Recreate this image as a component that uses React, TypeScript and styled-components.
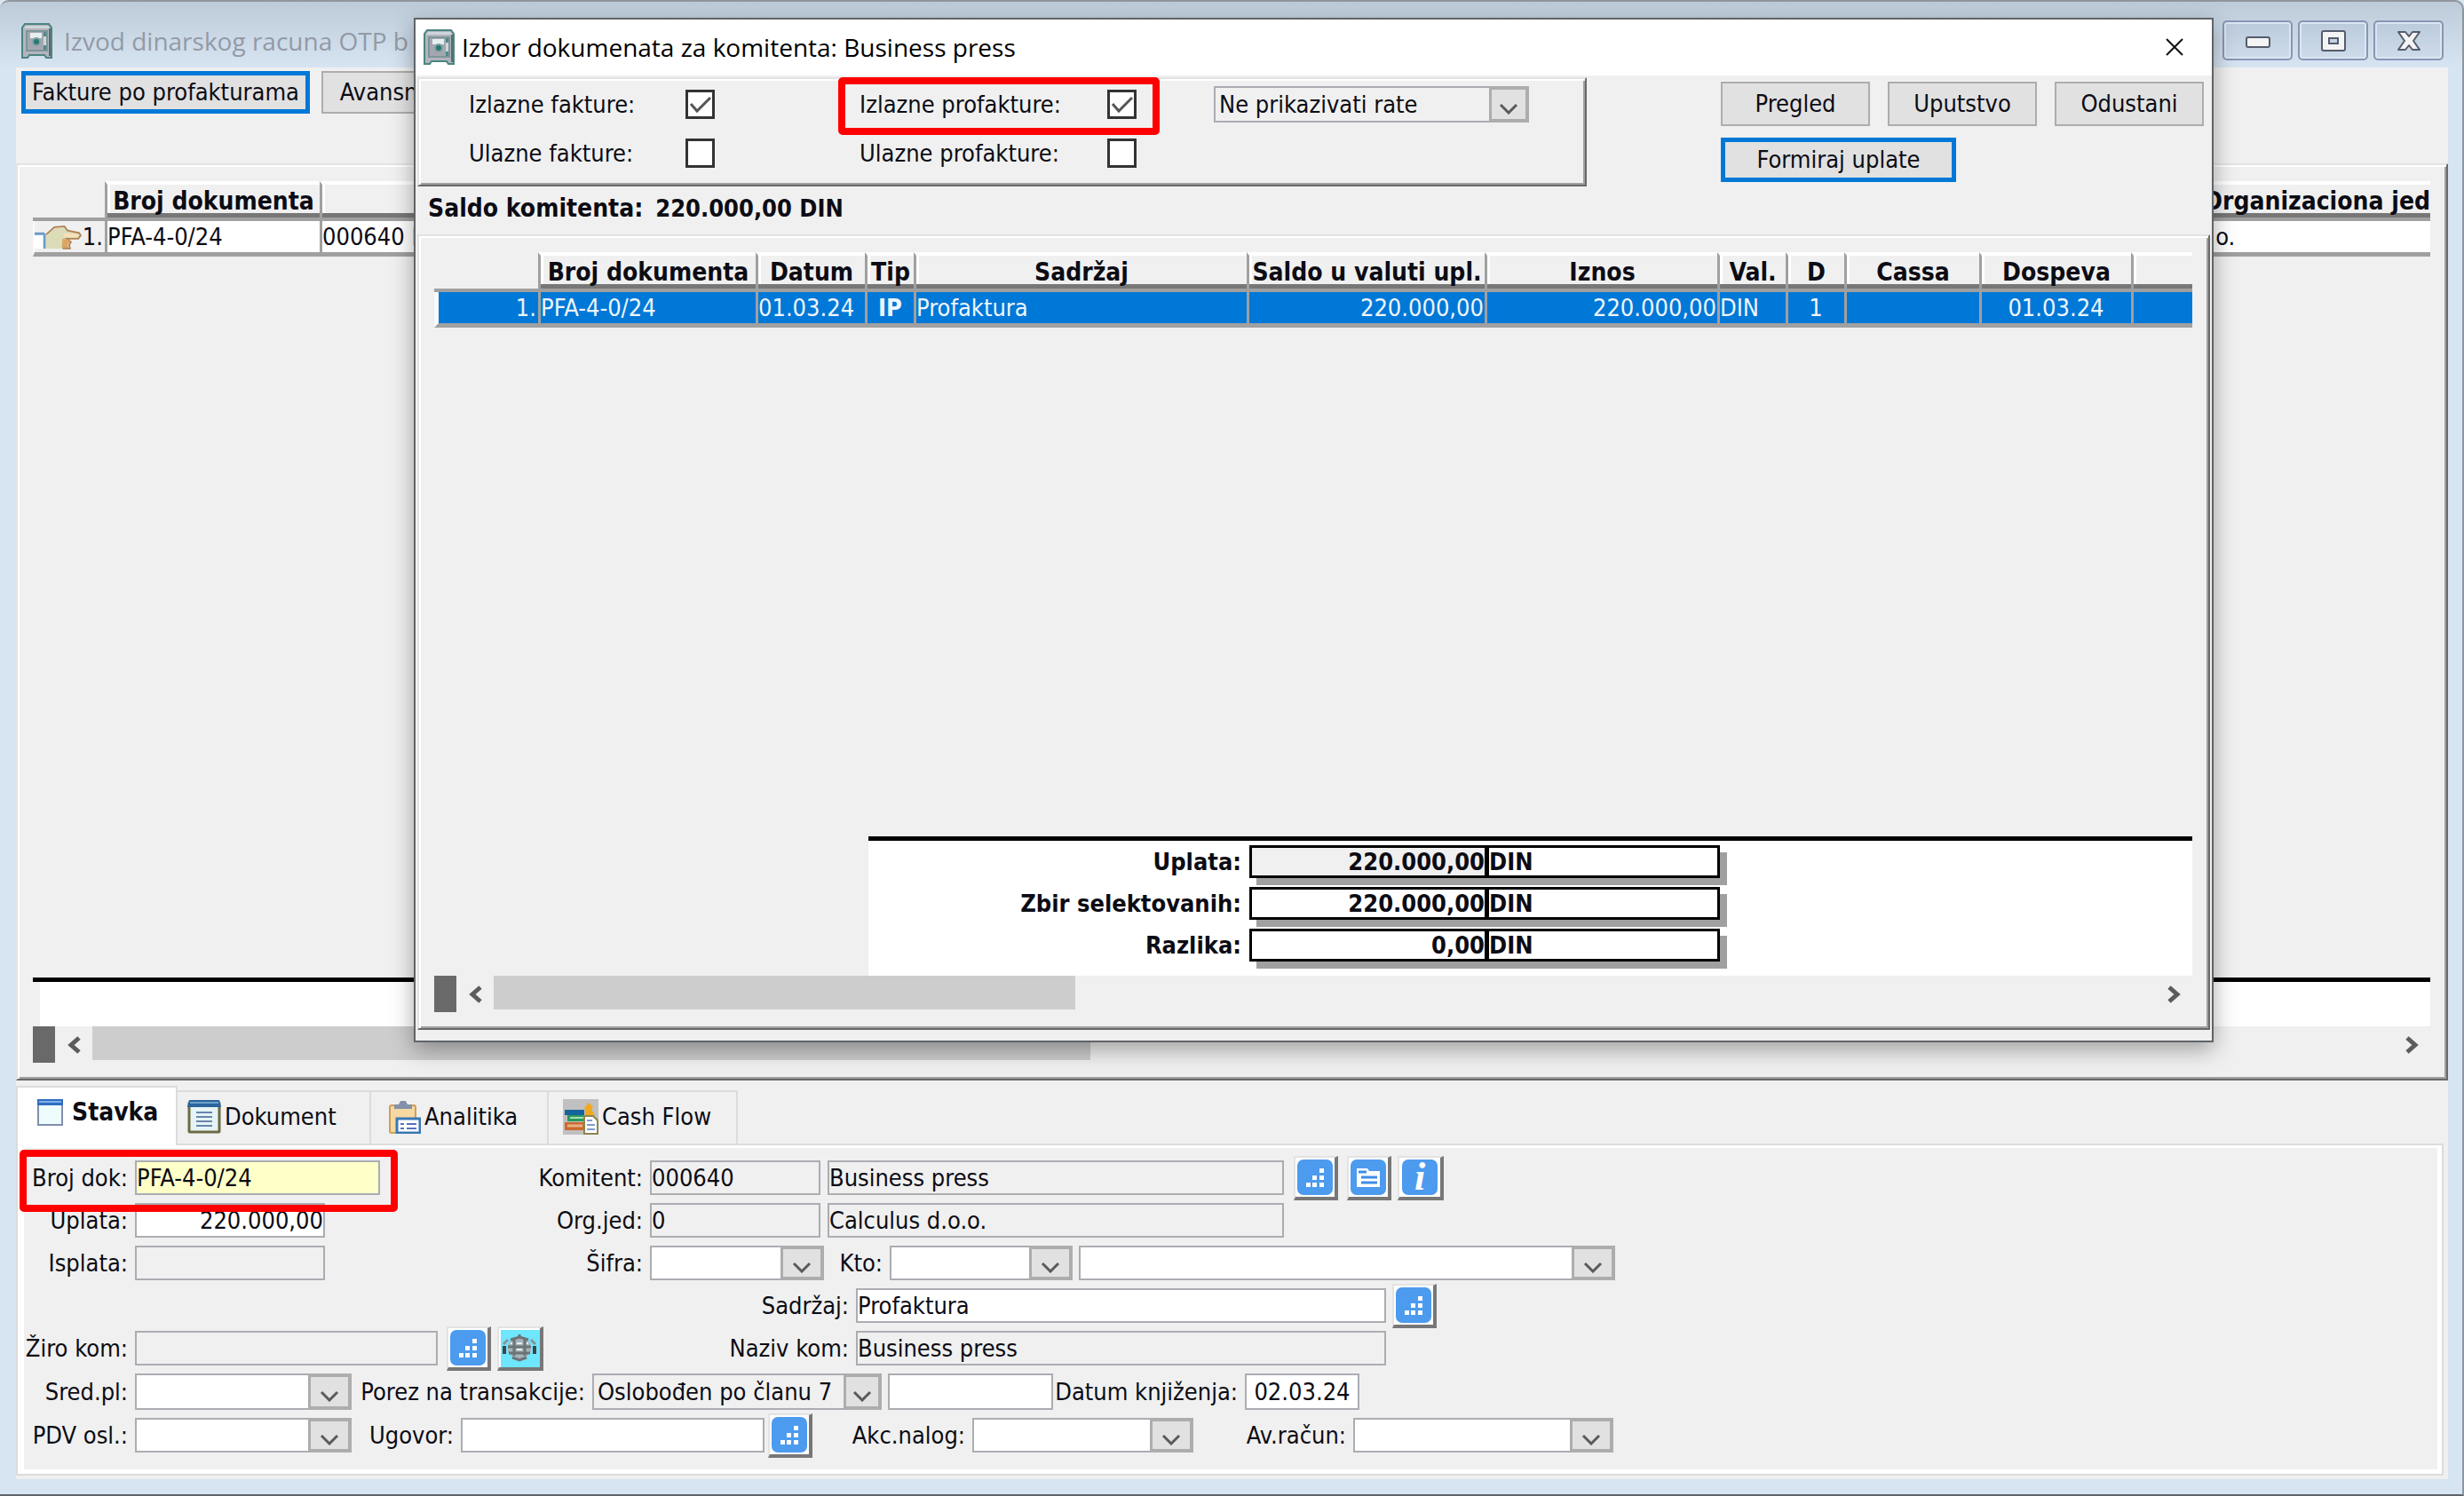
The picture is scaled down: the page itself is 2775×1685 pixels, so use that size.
import React from "react";
import styled, { createGlobalStyle, css } from "styled-components";

const UI = '"DejaVu Sans Condensed", "DejaVu Sans", "Noto Sans", sans-serif';
const TITLE = '"Open Sans", "Noto Sans", sans-serif';

const Global = createGlobalStyle`
  *, *::before, *::after { box-sizing: border-box; }
  body { margin: 0; background: #d7e4f2; }
  button, input, select { font: inherit; color: inherit; margin: 0; }
`;

/* Raised 3D edge used by panels */
const raised = css`
  border: 2px solid;
  border-color: #e3e3e3 #696969 #696969 #e3e3e3;
  box-shadow: inset 2px 2px #fff, inset -2px -2px #a0a0a0;
`;

const Desktop = styled.div`
  position: relative;
  min-height: 100vh;
  display: flex;
  flex-direction: column;
  padding: 0 16px 17px 18px;
  border-top: 2px solid #8f959c;
  border-right: 2px solid #8f959c;
  border-bottom: 2px solid #5f646b;
  border-radius: 10px 10px 0 0;
  background: linear-gradient(#bdcbd9, #d7e4f2 74px);
  font: 27px/32px ${UI};
  color: #0c0c14;
`;

const TitleBar = styled.header`
  display: flex;
  align-items: center;
  height: 74px;
  padding: 13px 5px 0 6px;
  gap: 13px;
  font: 28px/36px ${TITLE};
  color: #929aa6;
`;

const TitleText = styled.h1`
  flex: 1;
  min-width: 0;
  margin: 0;
  font: inherit;
  white-space: nowrap;
`;

const WindowButtons = styled.div`
  display: flex;
  gap: 6px;
`;

const WindowButton = styled.button`
  width: 79px;
  height: 45px;
  padding: 0;
  display: grid;
  place-items: center;
  border: 2px solid #8796b4;
  border-radius: 5px;
  box-shadow: inset 0 0 0 2px #dbe6f2;
  background: linear-gradient(#bccbdc, #cddbea);
`;

const Client = styled.main`
  flex: 1;
  display: flex;
  flex-direction: column;
  background: #f0f0f0;
  padding-bottom: 4px;
`;

const Toolbar = styled.div`
  display: flex;
  gap: 13px;
  height: 108px;
  padding: 4px 6px;
`;

const PushButton = styled.button<{ $w: number; $primary?: boolean; $h?: number }>`
  width: ${(p) => p.$w}px;
  height: ${(p) => p.$h ?? 50}px;
  padding: 0;
  border: ${(p) => (p.$primary ? "5px solid #0078d7" : "2px solid #adadad")};
  background: #e1e1e1;
  text-align: center;
  white-space: nowrap;
`;

const ListPanel = styled.section<{ $inDialog?: boolean }>`
  ${raised}
  flex: 1;
  display: flex;
  flex-direction: column;
  padding: 18px 18px 18px 17px;
  margin: ${(p) => (p.$inDialog ? "0 2px 12px" : "0")};
`;

const Spacer = styled.div`
  flex: 1;
`;

const Grid = styled.table`
  width: 100%;
  table-layout: fixed;
  border-collapse: separate;
  border-spacing: 0;
`;

const Head = styled.th<{ $end?: boolean }>`
  height: 45px;
  padding: 0;
  border-top: 4px solid #fff;
  border-bottom: 4px solid #a0a0a0;
  border-left: 3px solid #a0a0a0;
  box-shadow: inset 0 -5px #777, inset 3px 0 #fff;
  font-size: 28px;
  line-height: 32px;
  text-align: ${(p) => (p.$end ? "right" : "center")};
  white-space: nowrap;
`;

const Corner = styled.td`
  padding: 0;
  border-bottom: 4px solid #a0a0a0;
`;

const Cell = styled.td<{ $sel?: boolean; $align?: string; $bold?: boolean }>`
  height: 40px;
  padding: 0 1px 0 0;
  border-left: 3px solid #a0a0a0;
  border-bottom: 5px solid #a0a0a0;
  background: ${(p) => (p.$sel ? "#0078d7" : "#fff")};
  color: ${(p) => (p.$sel ? "#eef5fc" : "inherit")};
  text-align: ${(p) => p.$align ?? "left"};
  font-weight: ${(p) => (p.$bold ? 700 : 400)};
  line-height: 32px;
  white-space: nowrap;
`;

const RowHead = styled.th<{ $sel?: boolean }>`
  height: 40px;
  padding: 0;
  border-bottom: 5px solid #a0a0a0;
  border-left: ${(p) => (p.$sel ? 5 : 2)}px solid #fbfbfb;
  background: ${(p) => (p.$sel ? "#0078d7" : "#f0f0f0")};
  color: ${(p) => (p.$sel ? "#eef5fc" : "inherit")};
  font-weight: 400;
`;

const RowHeadInner = styled.div`
  display: flex;
  align-items: center;
  justify-content: flex-end;
  gap: 1px;
  padding-right: 2px;
  line-height: 32px;
`;

const Footer = styled.div<{ $indent: number; $h: number }>`
  margin-left: ${(p) => p.$indent}px;
  height: ${(p) => p.$h}px;
  padding-top: 5px;
  border-top: 5px solid #000;
  background: #fff;
  display: flex;
  flex-direction: column;
  gap: 10px;
`;

const SummaryStrip = styled.div`
  height: 55px;
  padding-left: 8px;
  border-top: 5px solid #000;
  background: #fff content-box;
`;

const Total = styled.div`
  display: flex;
  align-items: center;
  height: 37px;
  font-weight: 700;
`;

const TotalLabel = styled.label`
  width: 429px;
  padding-right: 9px;
  text-align: right;
  white-space: nowrap;
`;

const TotalBox = styled.div`
  display: flex;
  width: 530px;
  height: 37px;
  border: 3px solid #000;
  box-shadow: 8px 8px #a0a0a0;
`;

const TotalValue = styled.input<{ $gray?: boolean }>`
  width: 267px;
  padding: 0;
  border: 0;
  border-right: 5px solid #000;
  background: ${(p) => (p.$gray ? "#f0f0f0" : "#fff")};
  font-weight: 700;
  text-align: right;
`;

const TotalUnit = styled.span`
  flex: 1;
  line-height: 32px;
  background: #fff;
`;

const ScrollRow = styled.div`
  display: flex;
  height: 41px;
`;

const ScrollGrip = styled.div`
  width: 25px;
  background: #696969;
`;

const ScrollArrow = styled.button`
  width: 42px;
  padding: 0;
  border: 0;
  background: none;
  display: grid;
  place-items: center;
`;

const ScrollTrack = styled.div`
  flex: 1;
`;

const ScrollThumb = styled.div<{ $pct: number }>`
  width: ${(p) => p.$pct}%;
  height: 38px;
  background: #cdcdcd;
`;

const Tabs = styled.div`
  display: flex;
  align-items: flex-end;
  margin-top: 6px;
`;

const Tab = styled.button<{ $w: number; $pad: number; $on?: boolean }>`
  width: ${(p) => p.$w}px;
  height: ${(p) => (p.$on ? 67 : 60)}px;
  display: flex;
  align-items: center;
  gap: ${(p) => (p.$on ? 10 : 4)}px;
  padding: 0 0 ${(p) => (p.$on ? 10 : 3)}px ${(p) => p.$pad}px;
  border: 2px solid #dcdcdc;
  border-left-width: ${(p) => (p.$on ? 2 : 0)}px;
  border-bottom: 0;
  background: ${(p) => (p.$on ? "#fff" : "#f0f0f0")};
  margin-bottom: ${(p) => (p.$on ? -2 : 0)}px;
  position: relative;
  font-weight: ${(p) => (p.$on ? 700 : 400)};
  font-size: ${(p) => (p.$on ? 28 : 27)}px;
  white-space: nowrap;
`;

const Page = styled.section`
  margin-right: 5px;
  border: 2px solid #dcdcdc;
`;

const Form = styled.form`
  display: flex;
  flex-direction: column;
  gap: 9px;
  padding: 14px 0 19px;
  border: solid #fff;
  border-width: 3px 5px 5px 7px;
`;

const Row = styled.div<{ $h?: number }>`
  display: flex;
  align-items: center;
  height: ${(p) => p.$h ?? 39}px;
`;

const Marked = styled.div`
  position: relative;
  display: flex;
  align-items: center;
  height: 100%;
`;

const RedFrame = styled.span<{ $inset: string }>`
  position: absolute;
  inset: ${(p) => p.$inset};
  border: 8px solid #fe0000;
  border-radius: 5px;
  pointer-events: none;
  z-index: 2;
`;

const Label = styled.label<{ $w: number }>`
  width: ${(p) => p.$w}px;
  padding-right: 8px;
  text-align: right;
  white-space: nowrap;
`;

const Field = styled.input<{ $w: number; $tone?: "gray" | "yellow"; $right?: boolean; $mid?: boolean; $gap?: number }>`
  width: ${(p) => p.$w}px;
  height: 100%;
  margin-left: ${(p) => p.$gap ?? 0}px;
  padding: 0;
  border: 2px solid #abadb3;
  border-radius: 0;
  outline: 0;
  background: ${(p) => (p.$tone === "gray" ? "#f0f0f0" : p.$tone === "yellow" ? "#ffffc8" : "#fff")};
  text-align: ${(p) => (p.$right ? "right" : p.$mid ? "center" : "left")};
`;

const SelectBox = styled.div<{ $w: number; $gap?: number }>`
  display: grid;
  width: ${(p) => p.$w}px;
  height: 100%;
  margin-left: ${(p) => p.$gap ?? 0}px;
  > * { grid-area: 1 / 1; }
`;

const Select = styled.select<{ $gray?: boolean }>`
  appearance: none;
  width: 100%;
  height: 100%;
  padding: 0 50px 0 4px;
  border: 2px solid #abadb3;
  border-radius: 0;
  background: ${(p) => (p.$gray ? "#f0f0f0" : "#fff")};
`;

const Arrow = styled.span<{ $w: number }>`
  justify-self: end;
  width: ${(p) => p.$w}px;
  display: grid;
  place-items: center;
  padding-top: 9px;
  border: 4px solid #adadad;
  border-left-width: 3px;
  background: #e1e1e1;
  pointer-events: none;
`;

const IconButton = styled.button<{ $gap: number; $w?: number; $cyan?: boolean }>`
  flex: none;
  width: ${(p) => p.$w ?? 50}px;
  height: 50px;
  margin-left: ${(p) => p.$gap}px;
  padding: 0;
  display: grid;
  place-items: center;
  border: solid;
  border-width: 2px 4px 4px 2px;
  border-color: #e3e3e3 #777 #777 #e3e3e3;
  background: ${(p) => (p.$cyan ? "#6ee6fd" : "#fff")};
  box-shadow: inset 2px 2px #fff;
`;

const Tile = styled.span`
  width: 40px;
  height: 40px;
  display: grid;
  place-items: center;
  border-radius: 7px;
  background: #4c9bee;
  color: #fff;
  font: italic bold 44px/38px "Liberation Serif", serif;
`;

const Dialog = styled.section`
  position: absolute;
  top: 18px;
  left: 466px;
  right: 280px;
  bottom: 509px;
  display: flex;
  flex-direction: column;
  border: 2px solid #606468;
  background: #f0f0f0;
  box-shadow: 0 8px 24px rgba(0, 0, 0, 0.34);
  z-index: 5;
`;

const DialogTitle = styled.header`
  display: flex;
  align-items: center;
  gap: 8px;
  height: 63px;
  padding: 0 22px 1px 9px;
  background: #fff;
  color: #000;
  font: 28px/36px ${TITLE};
`;

const CloseButton = styled.button`
  width: 40px;
  height: 40px;
  padding: 0;
  border: 0;
  background: none;
  display: grid;
  place-items: center;
`;

const DialogTop = styled.div`
  display: flex;
  justify-content: space-between;
  padding: 2px 9px 0 2px;
`;

const Filters = styled.fieldset`
  ${raised}
  width: 1317px;
  height: 123px;
  margin: 0;
  padding: 8px 0 0 56px;
  display: grid;
  grid-template-columns: 440px 399px 355px;
  grid-auto-rows: 41px;
  row-gap: 14px;
`;

const Check = styled.div`
  position: relative;
  justify-self: start;
  display: flex;
  align-items: center;
`;

const CheckLabel = styled.label<{ $w: number }>`
  width: ${(p) => p.$w}px;
  white-space: nowrap;
`;

const CheckMark = styled.span`
  display: grid;
  width: 33px;
  height: 33px;
  > * { grid-area: 1 / 1; }
  svg { pointer-events: none; }
`;

const CheckInput = styled.input`
  appearance: none;
  width: 33px;
  height: 33px;
  border: 3px solid #333;
  background: #fff;
  & + svg { visibility: hidden; }
  &:checked + svg { visibility: visible; }
`;

const Actions = styled.div`
  display: grid;
  grid-template-columns: repeat(3, 168px);
  gap: 13px 20px;
  align-content: start;
  padding-top: 5px;
`;

const Saldo = styled.p`
  margin: 0;
  height: 54px;
  padding-left: 14px;
  display: flex;
  gap: 14px;
  font-weight: 700;
  line-height: 50px;
`;

const Caption = styled.span`
  font-size: 28px;
`;

const SafeIcon = () => (
  <svg width="35" height="40" viewBox="0 0 35 40" aria-hidden="true">
    <path d="M4 1h27l3 4v34h-6l-2-3H9l-2 3H1V5z" fill="#b4b4be" stroke="#4a8580" strokeWidth="2" />
    <path d="M5 3h25l2 3H3z" fill="#cfd6da" />
    <path d="M31 6h2v31h-2z" fill="#4f6f74" />
    <rect x="6" y="9" width="23" height="22" fill="#a4a6b0" stroke="#7d9698" strokeWidth="2" />
    <rect x="10" y="11" width="13" height="6" fill="#e6efef" />
    <rect x="25" y="10" width="3" height="20" fill="#4b8c84" />
    <rect x="25" y="15" width="3" height="10" fill="#cfd6da" />
    <circle cx="17" cy="21" r="5" fill="#7fa3a4" />
    <circle cx="17" cy="21" r="3" fill="#2a7771" />
  </svg>
);

const HandIcon = () => (
  <svg width="57" height="29" viewBox="0 0 57 29" aria-hidden="true">
    <rect x="0" y="10" width="11" height="19" fill="#fff" />
    <path d="M0 11h12M12 11v18" fill="none" stroke="#6b9bc9" strokeWidth="3" />
    <path d="M14 29V13L24 3l12-1 4 4 14 3 2 4-3 4H41l3 4-3 3v5z" fill="#dcdcb8" />
    <path d="M14 12L24 3l12-1 4 5 14 3 2 3-3 4H39l5 4-2 4 1 4h-9" fill="none" stroke="#b08257" strokeWidth="2" />
    <path d="M34 11h18l2 2-2 2H36z" fill="#f6e0b8" />
    <path d="M34 17l7 1 2 3-3 3 1 4h-8z" fill="#dca560" />
  </svg>
);

const MinIcon = () => (
  <svg width="28" height="16" viewBox="0 0 28 16" aria-hidden="true">
    <rect x="1" y="4" width="26" height="11" rx="2" fill="#f4f4f4" stroke="#555c6c" strokeWidth="2" />
  </svg>
);
const MaxIcon = () => (
  <svg width="28" height="24" viewBox="0 0 28 24" aria-hidden="true">
    <rect x="1" y="1" width="26" height="22" rx="2" fill="#f4f4f4" stroke="#555c6c" strokeWidth="2" />
    <rect x="9" y="9" width="10" height="6" fill="#c4d2e2" stroke="#555c6c" strokeWidth="2" />
  </svg>
);
const XIcon = () => (
  <svg width="28" height="24" viewBox="0 0 28 24" aria-hidden="true">
    <path d="M2 2h8l4 5 4-5h8l-7 10 7 10h-8l-4-5-4 5H2l7-10z" fill="#f4f4f4" stroke="#555c6c" strokeWidth="2" strokeLinejoin="round" />
  </svg>
);

const Chevron = ({ dir }: { dir: "left" | "right" }) => (
  <svg width="18" height="20" viewBox="0 0 18 20" aria-hidden="true">
    <path d={dir === "left" ? "M15 2L6 10l9 8" : "M4 2l9 8-9 8"} fill="none" stroke="#5c5c5c" strokeWidth="5" />
  </svg>
);

const Dots = () => (
  <Tile>
    <svg width="40" height="40" viewBox="0 0 40 40" fill="#fff" aria-hidden="true">
      <path d="M25 10h5v5h-5zM17 18h5v5h-5zM25 18h5v5h-5zM10 26h5v5h-5zM17 26h5v5h-5zM25 26h5v5h-5z" />
    </svg>
  </Tile>
);

const Folder = () => (
  <Tile>
    <svg width="40" height="40" viewBox="0 0 40 40" aria-hidden="true">
      <path d="M7 10h12l2 3h12v18H7z" fill="#fff" />
      <path d="M9 14h9M12 20h18M12 26h18" stroke="#3c8de6" strokeWidth="3" />
    </svg>
  </Tile>
);

const Globe = () => (
  <svg width="44" height="42" viewBox="0 0 44 42" fill="none" aria-hidden="true">
    <path d="M22 7l9 5 4 6v8l-5 5-8 4-8-4-5-5v-8l4-6z" fill="#a3b3b7" />
    <path d="M22 6v4M12 12l10-3 10 3M9 20h26M10 27h24M14 32l8 3 8-3M16 12v18M28 12v18" stroke="#6c7478" strokeWidth="3" />
    <path d="M9 12l-5 5M35 12l5 5" stroke="#8a9498" strokeWidth="3" />
    <path d="M5 19v9M39 19v9" stroke="#3f4446" strokeWidth="4" />
    <path d="M19 16h6M19 23h6M12 16h2M30 16h2" stroke="#e8eeee" strokeWidth="2" />
  </svg>
);

const StavkaIcon = () => (
  <svg width="29" height="30" viewBox="0 0 29 30" aria-hidden="true">
    <rect x="1" y="1" width="27" height="28" fill="#effcfd" stroke="#7f8fae" strokeWidth="2" />
    <path d="M0 0h29v7H0z" fill="#2f6cc0" />
    <path d="M2 2h25v2H2z" fill="#7fb0ea" />
  </svg>
);
const DocIcon = () => (
  <svg width="38" height="38" viewBox="0 0 38 38" aria-hidden="true">
    <rect x="2" y="3" width="34" height="33" rx="1" fill="#e6f4f5" stroke="#6c6b45" strokeWidth="3" />
    <path d="M2 0h34l2 8H0z" fill="#2b639c" />
    <path d="M3 3h32" stroke="#6ca3cf" strokeWidth="2" />
    <path d="M10 14h18M10 19h18M10 24h18M10 29h18" stroke="#6884b0" strokeWidth="2" />
  </svg>
);
const ClipIcon = () => (
  <svg width="36" height="38" viewBox="0 0 36 38" aria-hidden="true">
    <rect x="1" y="6" width="29" height="31" rx="2" fill="#f5d8a2" stroke="#d19f58" strokeWidth="2" />
    <path d="M6 10V5h5l2-4h6l2 4h5v5z" fill="#8391a8" />
    <rect x="9" y="21" width="26" height="16" fill="#fff" stroke="#3a78b5" strokeWidth="3" />
    <path d="M13 27h4M20 27h11M13 32h4M20 32h11" stroke="#5a6fc0" strokeWidth="2" />
  </svg>
);
const CashIcon = () => (
  <svg width="40" height="40" viewBox="0 0 40 40" aria-hidden="true">
    <path d="M0 0h40v40H0z" fill="#c0c0c0" />
    <path d="M2 12h22v6H2z" fill="#17639c" />
    <path d="M5 18h19v7H5z" fill="#2b9a5a" />
    <path d="M8 21h15" stroke="#a7dcb8" strokeWidth="2" />
    <path d="M2 26h21v9H2z" fill="#cc6a30" />
    <path d="M5 30h17" stroke="#e9b184" strokeWidth="3" />
    <path d="M29 4l5 5-2 3 4 6H25v-6l-1-2z" fill="#f0a91c" />
    <path d="M24 19h10l5 5v15H24z" fill="#fff" stroke="#8c8550" strokeWidth="2" />
    <path d="M27 24h6M27 29h9M27 34h9" stroke="#7d9cd0" strokeWidth="2" />
  </svg>
);

const DropDown = ({ id, w, gap, text = "", gray, arrow = 49, label }: {
  id: string; w: number; gap?: number; text?: string; gray?: boolean; arrow?: number; label?: string;
}) => (
  <SelectBox $w={w} $gap={gap}>
    <Select id={id} $gray={gray} aria-label={label} defaultValue={text}>
      <option value={text}>{text}</option>
    </Select>
    <Arrow $w={arrow}>
      <svg width="22" height="13" viewBox="0 0 22 13" aria-hidden="true">
        <path d="M2 2l9 9 9-9" fill="none" stroke="#5a5a5a" strokeWidth="3" />
      </svg>
    </Arrow>
  </SelectBox>
);

const ScrollBar = ({ pct }: { pct: number }) => (
  <ScrollRow>
    <ScrollGrip />
    <ScrollArrow type="button" aria-label="scroll left"><Chevron dir="left" /></ScrollArrow>
    <ScrollTrack><ScrollThumb $pct={pct} /></ScrollTrack>
    <ScrollArrow type="button" aria-label="scroll right"><Chevron dir="right" /></ScrollArrow>
  </ScrollRow>
);

const CheckItem = ({ id, w, text, on, marked }: { id: string; w: number; text: string; on?: boolean; marked?: boolean }) => (
  <Check>
    <CheckLabel htmlFor={id} $w={w}>{text}</CheckLabel>
    <CheckMark>
      <CheckInput type="checkbox" id={id} defaultChecked={on} />
      <svg width="33" height="33" viewBox="0 0 33 33" aria-hidden="true">
        <path d="M6 16l7 8L28 9" fill="none" stroke="#555" strokeWidth="3" />
      </svg>
    </CheckMark>
    {marked && <RedFrame $inset="-10px -26px -14px -24px" />}
  </Check>
);

const columns: { title: string; value: string; w?: number; align?: string; bold?: boolean }[] = [
  { title: "Broj dokumenta", value: "PFA-4-0/24", w: 245 },
  { title: "Datum", value: "01.03.24", w: 123 },
  { title: "Tip", value: "IP", w: 55, align: "center", bold: true },
  { title: "Sadržaj", value: "Profaktura", w: 375 },
  { title: "Saldo u valuti upl.", value: "220.000,00", w: 268, align: "right" },
  { title: "Iznos", value: "220.000,00", w: 262, align: "right" },
  { title: "Val.", value: "DIN", w: 77 },
  { title: "D", value: "1", w: 66, align: "center" },
  { title: "Cassa", value: "", w: 152 },
  { title: "Dospeva", value: "01.03.24", w: 171, align: "center" },
  { title: "", value: "" },
];

const totals = [
  { id: "t-uplata", label: "Uplata:", value: "220.000,00", gray: true },
  { id: "t-zbir", label: "Zbir selektovanih:", value: "220.000,00" },
  { id: "t-razlika", label: "Razlika:", value: "0,00" },
];

export default function App() {
  return (
    <Desktop>
      <Global />
      <TitleBar>
        <SafeIcon />
        <TitleText>Izvod dinarskog racuna OTP b</TitleText>
        <WindowButtons>
          <WindowButton aria-label="minimize"><MinIcon /></WindowButton>
          <WindowButton aria-label="maximize"><MaxIcon /></WindowButton>
          <WindowButton aria-label="close window"><XIcon /></WindowButton>
        </WindowButtons>
      </TitleBar>

      <Client>
        <Toolbar>
          <PushButton $w={325} $h={48} $primary>Fakture po profakturama</PushButton>
          <PushButton $w={136} $h={48}>Avansni</PushButton>
        </Toolbar>

        <ListPanel>
          <Grid>
            <colgroup>
              <col style={{ width: 81 }} />
              <col style={{ width: 242 }} />
              <col />
              <col style={{ width: 290 }} />
            </colgroup>
            <thead>
              <tr>
                <Corner />
                <Head>Broj dokumenta</Head>
                <Head />
                <Head $end>Organizaciona jed</Head>
              </tr>
            </thead>
            <tbody>
              <tr>
                <RowHead><RowHeadInner><HandIcon />1.</RowHeadInner></RowHead>
                <Cell>PFA-4-0/24</Cell>
                <Cell>000640 Business press</Cell>
                <Cell>d.o.o.</Cell>
              </tr>
            </tbody>
          </Grid>
          <Spacer />
          <SummaryStrip />
          <ScrollBar pct={43.4} />
        </ListPanel>

        <Tabs role="tablist">
          <Tab role="tab" aria-selected $on $w={182} $pad={22}><StavkaIcon />Stavka</Tab>
          <Tab role="tab" $w={218} $pad={11}><DocIcon />Dokument</Tab>
          <Tab role="tab" $w={200} $pad={20}><ClipIcon />Analitika</Tab>
          <Tab role="tab" $w={213} $pad={16}><CashIcon />Cash Flow</Tab>
        </Tabs>

        <Page>
          <Form onSubmit={(e) => e.preventDefault()}>
            <Row>
              <Marked>
                <Label htmlFor="broj" $w={125}>Broj dok:</Label>
                <Field id="broj" $w={276} $tone="yellow" defaultValue="PFA-4-0/24" />
                <RedFrame $inset="-12px -20px -19px -5px" />
              </Marked>
              <Label htmlFor="komitent" $w={304}>Komitent:</Label>
              <Field id="komitent" $w={192} $tone="gray" defaultValue="000640" />
              <Field aria-label="Komitent naziv" $w={514} $gap={8} $tone="gray" defaultValue="Business press" />
              <IconButton type="button" aria-label="izbor" $gap={11}><Dots /></IconButton>
              <IconButton type="button" aria-label="kartica" $gap={10}><Folder /></IconButton>
              <IconButton type="button" aria-label="info" $gap={7} $w={52}><Tile>i</Tile></IconButton>
            </Row>
            <Row>
              <Label htmlFor="uplata" $w={125}>Uplata:</Label>
              <Field id="uplata" $w={214} $right defaultValue="220.000,00" />
              <Label htmlFor="org" $w={366}>Org.jed:</Label>
              <Field id="org" $w={192} $tone="gray" defaultValue="0" />
              <Field aria-label="Org.jed naziv" $w={514} $gap={8} $tone="gray" defaultValue="Calculus d.o.o." />
            </Row>
            <Row>
              <Label htmlFor="isplata" $w={125}>Isplata:</Label>
              <Field id="isplata" $w={214} $tone="gray" />
              <Label htmlFor="sifra" $w={366}>Šifra:</Label>
              <DropDown id="sifra" w={196} />
              <Label htmlFor="kto" $w={74}>Kto:</Label>
              <DropDown id="kto" w={206} />
              <DropDown id="kto2" label="Kto naziv" w={604} gap={7} />
            </Row>
            <Row>
              <Label htmlFor="sadrzaj" $w={937}>Sadržaj:</Label>
              <Field id="sadrzaj" $w={597} defaultValue="Profaktura" />
              <IconButton type="button" aria-label="izbor" $gap={7}><Dots /></IconButton>
            </Row>
            <Row>
              <Label htmlFor="ziro" $w={125}>Žiro kom:</Label>
              <Field id="ziro" $w={341} $tone="gray" />
              <IconButton type="button" aria-label="izbor" $gap={10}><Dots /></IconButton>
              <IconButton type="button" aria-label="web" $gap={7} $w={52} $cyan><Globe /></IconButton>
              <Label htmlFor="naziv" $w={352}>Naziv kom:</Label>
              <Field id="naziv" $w={597} $tone="gray" defaultValue="Business press" />
            </Row>
            <Row $h={41}>
              <Label htmlFor="sred" $w={125}>Sred.pl:</Label>
              <DropDown id="sred" w={244} />
              <Label htmlFor="porez" $w={271}>Porez na transakcije:</Label>
              <DropDown id="porez" w={326} gray arrow={43} text="Oslobođen po članu 7" />
              <Field aria-label="Porez iznos" $w={186} $gap={7} />
              <Label htmlFor="datum" $w={216}>Datum knjiženja:</Label>
              <Field id="datum" $w={129} $mid defaultValue="02.03.24" />
            </Row>
            <Row>
              <Label htmlFor="pdv" $w={125}>PDV osl.:</Label>
              <DropDown id="pdv" w={244} />
              <Label htmlFor="ugovor" $w={123}>Ugovor:</Label>
              <Field id="ugovor" $w={342} />
              <IconButton type="button" aria-label="izbor" $gap={4}><Dots /></IconButton>
              <Label htmlFor="akc" $w={180}>Akc.nalog:</Label>
              <DropDown id="akc" w={249} />
              <Label htmlFor="av" $w={180}>Av.račun:</Label>
              <DropDown id="av" w={293} />
            </Row>
          </Form>
        </Page>
      </Client>

      <Dialog role="dialog" aria-labelledby="dlg-title">
        <DialogTitle>
          <SafeIcon />
          <TitleText as="h2" id="dlg-title">Izbor dokumenata za komitenta: Business press</TitleText>
          <CloseButton aria-label="close">
            <svg width="20" height="20" viewBox="0 0 20 20" aria-hidden="true">
              <path d="M1 1l18 18M19 1L1 19" stroke="#111" strokeWidth="2" />
            </svg>
          </CloseButton>
        </DialogTitle>
        <DialogTop>
          <Filters>
            <CheckItem id="if" w={244} text="Izlazne fakture:" on />
            <CheckItem id="ip" w={279} text="Izlazne profakture:" on marked />
            <DropDown id="rate" label="Rate" w={355} gray arrow={45} text="Ne prikazivati rate" />
            <CheckItem id="uf" w={244} text="Ulazne fakture:" />
            <CheckItem id="up" w={279} text="Ulazne profakture:" />
          </Filters>
          <Actions>
            <PushButton $w={168}>Pregled</PushButton>
            <PushButton $w={168}>Uputstvo</PushButton>
            <PushButton $w={168}>Odustani</PushButton>
            <PushButton $w={265} $primary>Formiraj uplate</PushButton>
          </Actions>
        </DialogTop>
        <Saldo><Caption>Saldo komitenta:</Caption><span>220.000,00 DIN</span></Saldo>

        <ListPanel $inDialog>
          <Grid>
            <colgroup>
              <col style={{ width: 117 }} />
              {columns.map((c, i) => <col key={i} style={c.w ? { width: c.w } : undefined} />)}
            </colgroup>
            <thead>
              <tr>
                <Corner />
                {columns.map((c, i) => <Head key={i}>{c.title}</Head>)}
              </tr>
            </thead>
            <tbody>
              <tr>
                <RowHead $sel><RowHeadInner>1.</RowHeadInner></RowHead>
                {columns.map((c, i) => <Cell key={i} $sel $align={c.align} $bold={c.bold}>{c.value}</Cell>)}
              </tr>
            </tbody>
          </Grid>
          <Spacer />
          <Footer $indent={489} $h={157}>
            {totals.map((t) => (
              <Total key={t.id}>
                <TotalLabel htmlFor={t.id}>{t.label}</TotalLabel>
                <TotalBox>
                  <TotalValue id={t.id} readOnly value={t.value} $gray={t.gray} />
                  <TotalUnit>DIN</TotalUnit>
                </TotalBox>
              </Total>
            ))}
          </Footer>
          <ScrollBar pct={35} />
        </ListPanel>
      </Dialog>
    </Desktop>
  );
}
